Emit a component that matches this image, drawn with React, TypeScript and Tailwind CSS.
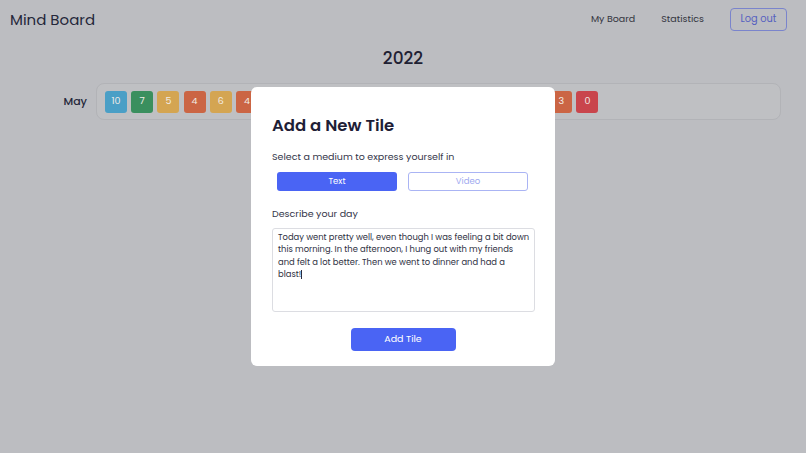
import React from "react";

const tiles: { v: number; c: string }[] = [
  { v: 10, c: "bg-[#4a9fc6]" },
  { v: 7, c: "bg-[#3a8f5e]" },
  { v: 5, c: "bg-[#d4a552]" },
  { v: 4, c: "bg-[#cb6544]" },
  { v: 6, c: "bg-[#d4a552]" },
  { v: 4, c: "bg-[#cb6544]" },
  { v: 8, c: "bg-[#3a8f5e]" },
  { v: 5, c: "bg-[#d4a552]" },
  { v: 9, c: "bg-[#4a9fc6]" },
  { v: 6, c: "bg-[#d4a552]" },
  { v: 7, c: "bg-[#3a8f5e]" },
  { v: 2, c: "bg-[#c9454c]" },
  { v: 4, c: "bg-[#cb6544]" },
  { v: 5, c: "bg-[#d4a552]" },
  { v: 8, c: "bg-[#3a8f5e]" },
  { v: 6, c: "bg-[#d4a552]" },
  { v: 4, c: "bg-[#cb6544]" },
  { v: 3, c: "bg-[#cb6544]" },
  { v: 0, c: "bg-[#c9454c]" },
];

export default function App() {
  return (
    <div
      className="relative w-[806px] h-[453px] overflow-hidden bg-[#bcbdc1] text-[#22243a]"
      style={{ fontFamily: "'Poppins', 'Inter', 'Open Sans', sans-serif" }}
    >
      <header className="flex items-center justify-between h-[23px] mt-[8px] pl-[10px] pr-[19px]">
        <div className="text-[15px] leading-[20px] text-[#25273a]">Mind Board</div>
        <nav className="flex items-center">
          <a className="text-[9.5px] text-[#34353f] mr-[26px]">My Board</a>
          <a className="text-[9.5px] text-[#34353f] mr-[26px]">Statistics</a>
          <button className="w-[57px] h-[23px] rounded-[4px] border border-[#7a84cc] text-[9.8px] text-[#5460c0] flex items-center justify-center">
            Log out
          </button>
        </nav>
      </header>

      <div className="text-center text-[17px] font-medium leading-[22px] mt-[16px] text-[#1f2133]">2022</div>

      <div className="flex items-center mt-[14px]">
        <div className="w-[96px] text-right pr-[9px] text-[11px] font-medium text-[#25273a]">May</div>
        <div className="w-[685px] h-[37px] rounded-[8px] border border-[#b2b3b7] bg-[#bfc0c3] flex items-center pl-[8px] gap-[4.2px]">
          {tiles.map((t, i) => (
            <div
              key={i}
              className={`${t.c} w-[22px] h-[22px] rounded-[3px] flex items-center justify-center text-[9.5px] text-[#f1ece6]`}
            >
              {t.v}
            </div>
          ))}
        </div>
      </div>

      <div className="absolute inset-0 flex items-center justify-center">
        <div className="w-[304px] h-[279px] bg-white rounded-[6px] px-[21px] pt-[29px]">
          <h2 className="text-[16.5px] font-semibold leading-[20px] text-[#1e2036]">Add a New Tile</h2>
          <p className="mt-[15px] text-[9.5px] leading-[12px] text-[#34364a]">Select a medium to express yourself in</p>
          <div className="flex gap-[11px] pl-[5px] mt-[9px]">
            <button className="w-[120px] h-[19px] rounded-[3px] bg-[#4a64f4] text-white text-[8.5px] flex items-center justify-center">
              Text
            </button>
            <button className="w-[120px] h-[19px] rounded-[3px] border border-[#aab4f4] text-[#a0aaf0] text-[8.5px] flex items-center justify-center">
              Video
            </button>
          </div>
          <p className="mt-[17px] text-[9.5px] leading-[12px] text-[#34364a]">Describe your day</p>
          <div className="mt-[8px] w-[263px] h-[84px] rounded-[3px] border border-[#dcdde2] pl-[5px] pr-[4px] pt-[2px] text-[8.4px] leading-[12.4px] text-[#2e3042]">
            Today went pretty well, even though I was feeling a bit down this morning. In the afternoon, I hung out with my friends and felt a lot better. Then we went to dinner and had a blast!
            <span className="inline-block w-[1px] h-[9px] bg-[#2a2c3e] align-middle" />
          </div>
          <div className="flex justify-center mt-[16px]">
            <button className="w-[105px] h-[23px] rounded-[4px] bg-[#4a64f4] text-white text-[9.5px] flex items-center justify-center">
              Add Tile
            </button>
          </div>
        </div>
      </div>
    </div>
  );
}
